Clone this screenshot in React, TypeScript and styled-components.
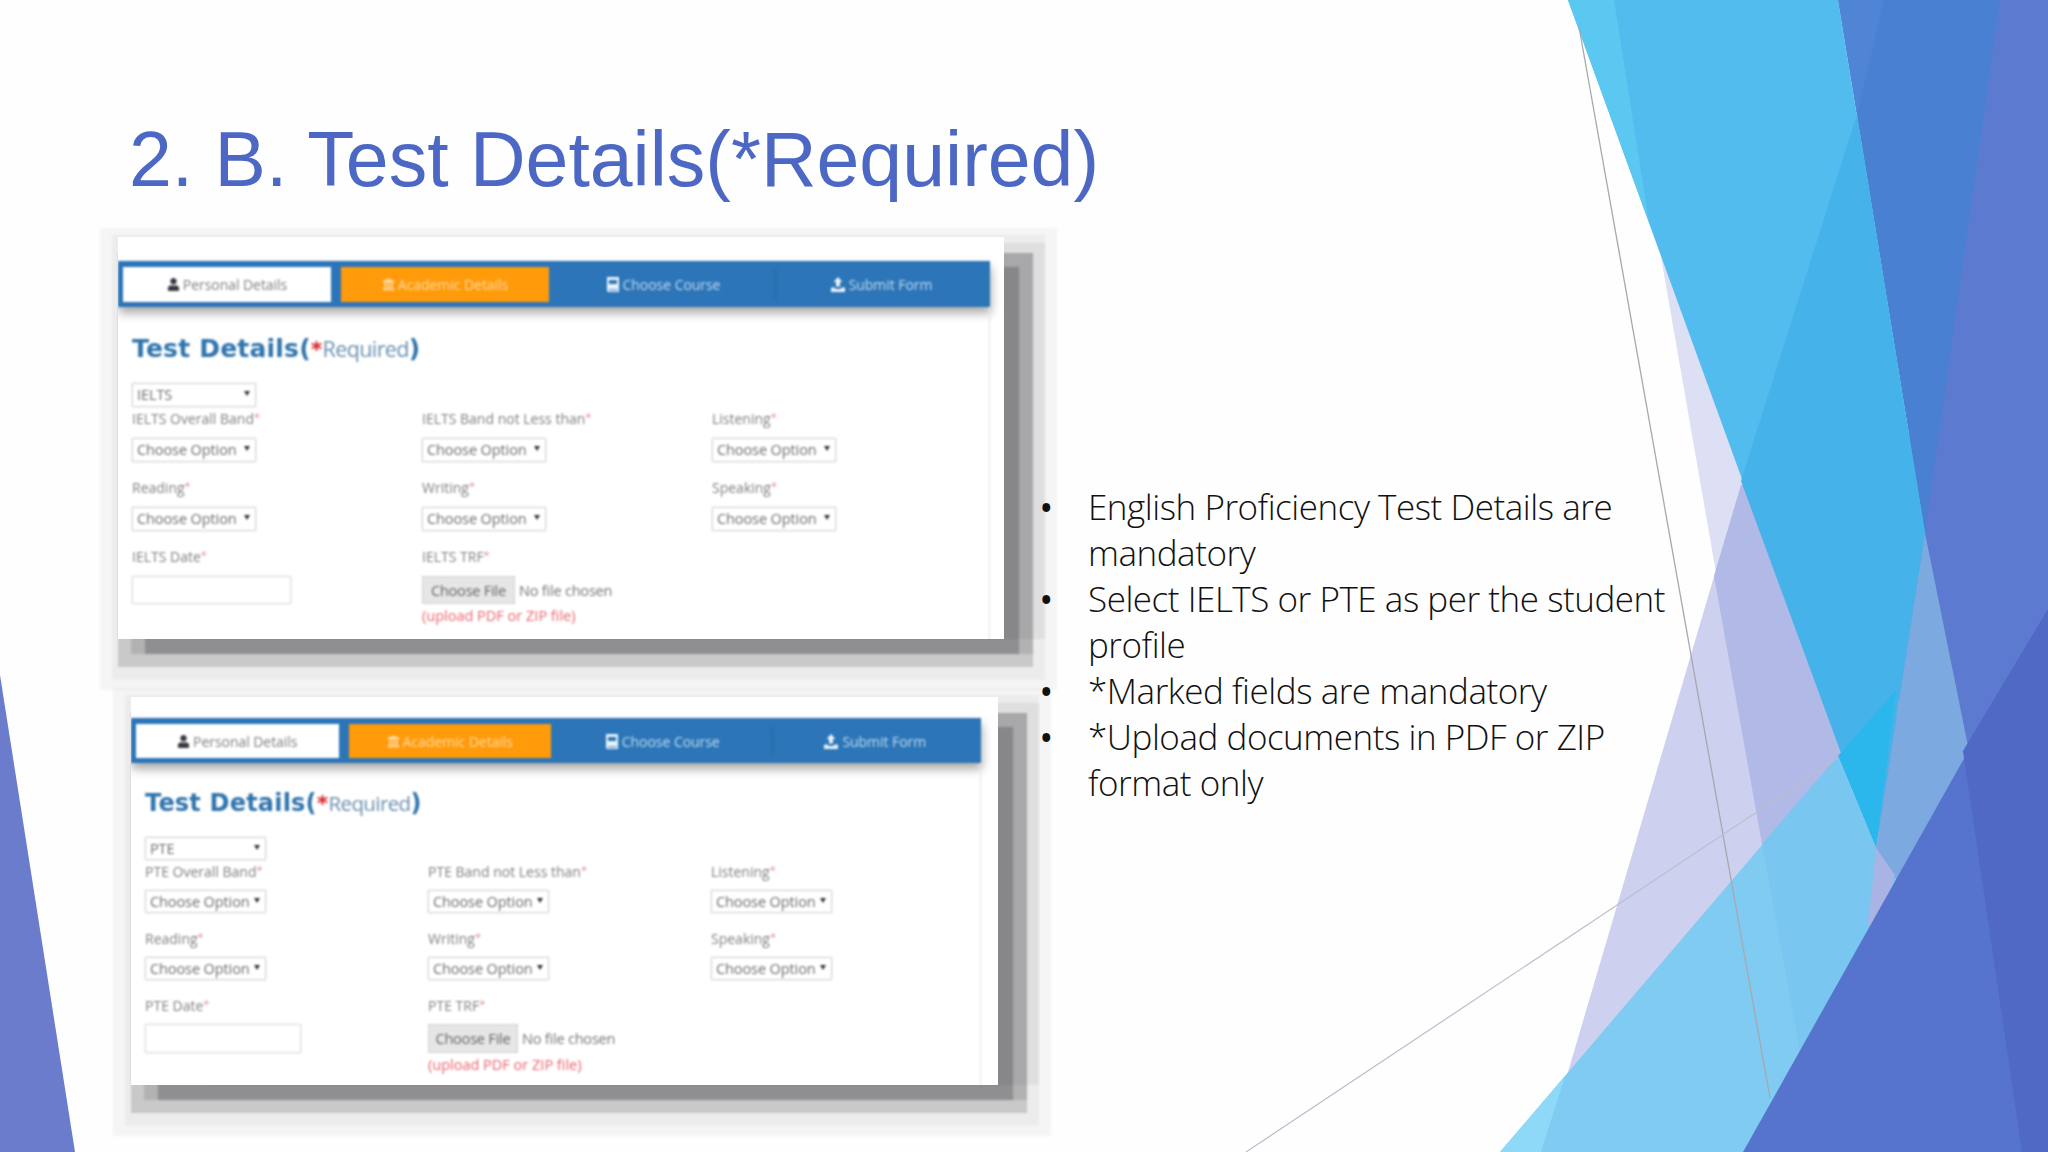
import styled, { createGlobalStyle } from "styled-components";
import { FaUser, FaUniversity } from "react-icons/fa";

const GlobalStyle = createGlobalStyle`
  html, body {
    margin: 0;
    padding: 0;
    background: #fefefe;
  }
`;

const facets: [string, string][] = [
  ["1950,0 2048,0 2048,1152 1800,1152 1900,533", "#5c7bd0"],
  ["1661,257 1817,1152 1900,1000 1850,600", "#dde0f4"],
  ["1741,485 1568,1072 1541,1152 1800,1152 1900,700", "#cdd1ef"],
  ["1714,576 1741,485 1770,480 1870,760 1762,844", "#b1b9e6"],
  ["1838,0 2000,0 1925,533", "#4a80d2"],
  ["1838,0 1884,0 1857,114", "#5085d5"],
  ["1568,0 1838,0 1925,533 1876,848", "#52bcef"],
  ["1568,0 1614,0 1649,222", "#5ac8f0"],
  ["1857,114 1741,481 1876,848 1925,533", "#45b2ea"],
  ["1838,756 1896,690 1876,848", "#2cb7ec"],
  ["1925,533 1970,756 1900,885 1876,848", "#7ba9e0"],
  ["1500,1152 1838,756 1876,848 1900,885 1780,1152", "#80cbf2"],
  ["1500,1152 1565,1076 1541,1152", "#8fd9f8"],
  ["1762,844 1838,756 1876,848 1900,885 1830,1052 1800,1052", "#79c6f0"],
  ["1876,848 1895,875 1880,925 1868,925", "#a9b3e4"],
  ["2048,609 2048,1152 1743,1152", "#5674cd"],
  ["1963,751 2022,1152 2048,1152 2048,609", "#4f69c4"],
  ["0,675 75,1152 0,1152", "#6a7ccb"],
];

// stepped shadow left by the video compression: [left, top, right, bottom, alpha], outward offsets from the picture
const shadowSteps: [number, number, number, number, number][] = [
  [18, 9, 53, 51, 0.04],
  [6, 2, 41, 41, 0.04],
  [0, -16, 29, 28, 0.16],
  [-13, -16, 29, 15, 0.12],
  [-80, -6, 41, 0, 0.06],
  [-27, -30, 15, 15, 0.22],
];

const Slide = styled.main`
  position: relative;
  width: 2048px;
  height: 1152px;
  overflow: hidden;
  background: #fefefe;
`;

const Backdrop = styled.svg`
  position: absolute;
  inset: 0;
`;

const Title = styled.h1`
  position: relative;
  margin: 0;
  padding: 109px 0 0 129px;
  height: 100px;
  font: 400 77px/100px "Liberation Sans", Arial, sans-serif;
  color: #4c68c4;
  white-space: nowrap;
`;

const Body = styled.div`
  position: relative;
  display: flex;
`;

const Figures = styled.div`
  width: 1046px;
  flex: none;
`;

const Figure = styled.figure<{ $left: number; $top: number; $width: number; $height: number }>`
  position: relative;
  margin: ${(p) => p.$top}px 0 0 ${(p) => p.$left}px;
  width: ${(p) => p.$width}px;
  height: ${(p) => p.$height}px;
`;

const ShadowStep = styled.div<{ $l: number; $t: number; $r: number; $b: number; $a: number }>`
  position: absolute;
  left: ${(p) => -p.$l}px;
  top: ${(p) => -p.$t}px;
  right: ${(p) => -p.$r}px;
  bottom: ${(p) => -p.$b}px;
  background: rgba(20, 20, 25, ${(p) => p.$a});
  filter: blur(0.8px);
`;

const Shot = styled.div<{ $navTop: number }>`
  position: relative;
  height: 100%;
  background: #fff;
  padding-top: ${(p) => p.$navTop}px;
  box-sizing: border-box;
  overflow: hidden;
  font-family: "Open Sans", "Liberation Sans", sans-serif;
`;

const Nav = styled.nav<{ $width: number; $height: number }>`
  position: relative;
  display: grid;
  grid-template-columns: repeat(4, 1fr);
  width: ${(p) => p.$width}px;
  height: ${(p) => p.$height}px;
  background: #2b75b8;
  box-shadow: 1px 6px 9px rgba(40, 40, 40, 0.4);
  filter: blur(0.8px);
`;

const Tab = styled.div<{ $kind: "plain" | "active" | "todo"; $divided?: boolean }>`
  display: flex;
  align-items: center;
  justify-content: center;
  gap: 3px;
  margin: 6px 5px 5px;
  font-size: 14px;
  letter-spacing: -0.05px;
  color: ${(p) => (p.$kind === "plain" ? "#808080" : p.$kind === "active" ? "#ffdca0" : "#c4dbef")};
  background: ${(p) => (p.$kind === "plain" ? "#fff" : p.$kind === "active" ? "#ff9a0b" : "transparent")};
  box-shadow: ${(p) => (p.$divided ? "-5px 0 3px -3px #276ca9" : "none")};

  svg {
    color: ${(p) => (p.$kind === "plain" ? "#3a3a44" : p.$kind === "active" ? "#ffe2b0" : "#eaf2fa")};
    flex: none;
  }
`;

const Panel = styled.div<{ $width: number; $top: number; $left: number; $rowGap: number; $col: number; $labelGap: number }>`
  box-sizing: border-box;
  width: ${(p) => p.$width}px;
  height: 100%;
  padding: ${(p) => p.$top}px 0 0 ${(p) => p.$left}px;
  border-right: 1px solid #e4e4e4;
  filter: blur(0.8px);

  --row-gap: ${(p) => p.$rowGap}px;
  --col: ${(p) => p.$col}px;
  --label-gap: ${(p) => p.$labelGap}px;
`;

const Heading = styled.h2<{ $size: number }>`
  margin: 0 0 14px;
  height: 40px;
  font: 700 ${(p) => p.$size}px/40px "DejaVu Sans", Verdana, sans-serif;
  letter-spacing: 0.2px;
  color: #2f74ad;
  white-space: nowrap;

  b {
    color: #d8262c;
    font-size: 22px;
  }

  span {
    font: 400 ${(p) => p.$size - 3.5}px/40px "Open Sans", sans-serif;
    letter-spacing: -0.6px;
    color: #6a8fb0;
  }
`;

const Grid = styled.div`
  display: grid;
  grid-template-columns: repeat(3, var(--col));
  row-gap: var(--row-gap);
`;

const Field = styled.div`
  display: flex;
  flex-direction: column;
  align-items: flex-start;
`;

const Label = styled.label`
  height: 24px;
  margin-bottom: var(--label-gap);
  font-size: 14px;
  line-height: 17px;
  color: #808080;
  white-space: nowrap;

  i {
    font-style: normal;
    color: #e58a8a;
    font-size: 11px;
    vertical-align: 3px;
  }
`;

const Select = styled.div<{ $width: number; $height: number; $top?: boolean }>`
  position: relative;
  box-sizing: border-box;
  width: ${(p) => p.$width}px;
  height: ${(p) => p.$height}px;
  padding-left: 4px;
  margin-bottom: ${(p) => (p.$top ? 1 : 0)}px;
  border: 1px solid #d6d6d6;
  font-size: 14.5px;
  line-height: ${(p) => p.$height - 2}px;
  letter-spacing: -0.1px;
  color: #6e6e6e;
  background: #fff;
  box-shadow: 0 0 2px rgba(0, 0, 0, 0.12);

  &::after {
    content: "";
    position: absolute;
    right: 5px;
    top: 7px;
    border: 3px solid transparent;
    border-top: 5px solid #333;
    border-bottom: 0;
  }
`;

const DateInput = styled.div<{ $width: number; $height: number }>`
  box-sizing: border-box;
  width: ${(p) => p.$width}px;
  height: ${(p) => p.$height}px;
  border: 1px solid #dcdcdc;
  box-shadow: 0 0 2px rgba(0, 0, 0, 0.1);
`;

const FileRow = styled.div<{ $height: number }>`
  display: flex;
  align-items: center;
  gap: 4px;
  height: ${(p) => p.$height}px;
  font-size: 14.5px;
  letter-spacing: -0.2px;
  color: #777;
  white-space: nowrap;
`;

const FileButton = styled.div<{ $width: number }>`
  box-sizing: border-box;
  width: ${(p) => p.$width}px;
  height: 100%;
  display: flex;
  align-items: center;
  justify-content: center;
  border: 1px solid #d2d2d2;
  background: #e6e6e6;
  color: #666;
`;

const UploadNote = styled.div`
  margin-top: 2px;
  font-size: 14.5px;
  line-height: 20px;
  color: #e8646e;
  white-space: nowrap;
`;

const Points = styled.ul`
  list-style: none;
  margin: 275px 0 0;
  padding: 0;
  width: 632px;
  font: 300 35px/46px "Open Sans", "Liberation Sans", sans-serif;
  letter-spacing: -0.46px;
  color: #111;
`;

const Point = styled.li`
  display: grid;
  grid-template-columns: 42px 1fr;
`;

const Dot = styled.span`
  margin-left: -5px;
  font-weight: 700;
  font-size: 28px;
`;

const BookIcon = () => (
  <svg width="14" height="15" viewBox="0 0 14 15" fill="currentColor">
    <path d="M1 0h12v15H2.5C1.5 15 1 14.3 1 13.5V0zm2 3v4h8V3H3zm-.2 9.5v1h9v-1h-9z" />
  </svg>
);

const OpenIcon = () => (
  <svg width="16" height="15" viewBox="0 0 16 15" fill="currentColor">
    <path d="M8 0l4.4 5H10v4.5H6V5H3.6L8 0zM1 10.5h3.5c.3 1 1 1.5 3.5 1.5s3.2-.5 3.5-1.5H15V15H1v-4.5z" />
  </svg>
);

type Geo = {
  left: number;
  top: number;
  width: number;
  height: number;
  navTop: number;
  navWidth: number;
  navHeight: number;
  panelTop: number;
  panelLeft: number;
  headingSize: number;
  rowGap: number;
  labelGap: number;
  col: number;
  selectWidth: number;
  selectHeight: number;
  inputWidth: number;
  inputHeight: number;
  fileWidth: number;
};

const TestForm = ({ test, geo }: { test: string; geo: Geo }) => {
  const option = (label: string) => (
    <Field key={label}>
      <Label>
        {label}
        <i>*</i>
      </Label>
      <Select $width={geo.selectWidth} $height={geo.selectHeight}>
        Choose Option
      </Select>
    </Field>
  );

  return (
    <Figure $left={geo.left} $top={geo.top} $width={geo.width} $height={geo.height}>
      {shadowSteps.map(([l, t, r, b, a], i) => (
        <ShadowStep key={i} $l={l} $t={t} $r={r} $b={b} $a={a} />
      ))}
      <Shot $navTop={geo.navTop}>
        <Nav $width={geo.navWidth} $height={geo.navHeight}>
          <Tab $kind="plain">
            <FaUser size={13} /> Personal Details
          </Tab>
          <Tab $kind="active">
            <FaUniversity size={13} /> Academic Details
          </Tab>
          <Tab $kind="todo">
            <BookIcon /> Choose Course
          </Tab>
          <Tab $kind="todo" $divided>
            <OpenIcon /> Submit Form
          </Tab>
        </Nav>
        <Panel
          $width={geo.navWidth}
          $top={geo.panelTop}
          $left={geo.panelLeft}
          $rowGap={geo.rowGap}
          $labelGap={geo.labelGap}
          $col={geo.col}
        >
          <Heading $size={geo.headingSize}>
            Test Details(<b>*</b>
            <span>Required</span>)
          </Heading>
          <Select $top $width={geo.selectWidth} $height={geo.selectHeight}>
            {test}
          </Select>
          <Grid>
            {option(`${test} Overall Band`)}
            {option(`${test} Band not Less than`)}
            {option("Listening")}
            {option("Reading")}
            {option("Writing")}
            {option("Speaking")}
            <Field>
              <Label>
                {test} Date<i>*</i>
              </Label>
              <DateInput $width={geo.inputWidth} $height={geo.inputHeight} />
            </Field>
            <Field>
              <Label>
                {test} TRF<i>*</i>
              </Label>
              <FileRow $height={geo.inputHeight}>
                <FileButton $width={geo.fileWidth}>Choose File</FileButton>
                No file chosen
              </FileRow>
              <UploadNote>(upload PDF or ZIP file)</UploadNote>
            </Field>
          </Grid>
        </Panel>
      </Shot>
    </Figure>
  );
};

const ieltsGeo: Geo = {
  left: 118,
  top: 28,
  width: 886,
  height: 402,
  navTop: 24,
  navWidth: 872,
  navHeight: 46,
  panelTop: 22,
  panelLeft: 14,
  headingSize: 25,
  rowGap: 15,
  labelGap: 6,
  col: 290,
  selectWidth: 124,
  selectHeight: 24,
  inputWidth: 159,
  inputHeight: 28,
  fileWidth: 93,
};

const pteGeo: Geo = {
  left: 131,
  top: 58,
  width: 867,
  height: 388,
  navTop: 21,
  navWidth: 850,
  navHeight: 45,
  panelTop: 20,
  panelLeft: 14,
  headingSize: 24,
  rowGap: 15,
  labelGap: 5,
  col: 283,
  selectWidth: 121,
  selectHeight: 23,
  inputWidth: 156,
  inputHeight: 29,
  fileWidth: 90,
};

const points = [
  "English Proficiency Test Details are mandatory",
  "Select IELTS or PTE as per the student profile",
  "*Marked fields are mandatory",
  "*Upload documents in PDF or ZIP format only",
];

export default function App() {
  return (
    <Slide>
      <GlobalStyle />
      <Backdrop width="2048" height="1152" viewBox="0 0 2048 1152">
        {facets.map(([pts, fill]) => (
          <polygon key={pts} points={pts} fill={fill} />
        ))}
        <line x1="1579" y1="27" x2="1770" y2="1098" stroke="#a8a8ae" strokeWidth="1.3" />
        <line x1="1838" y1="758" x2="1246" y2="1152" stroke="#bdbccf" strokeWidth="1.2" />
      </Backdrop>
      <Title>2. B. Test Details(*Required)</Title>
      <Body>
        <Figures>
          <TestForm test="IELTS" geo={ieltsGeo} />
          <TestForm test="PTE" geo={pteGeo} />
        </Figures>
        <Points>
          {points.map((p) => (
            <Point key={p}>
              <Dot>•</Dot>
              {p}
            </Point>
          ))}
        </Points>
      </Body>
    </Slide>
  );
}
